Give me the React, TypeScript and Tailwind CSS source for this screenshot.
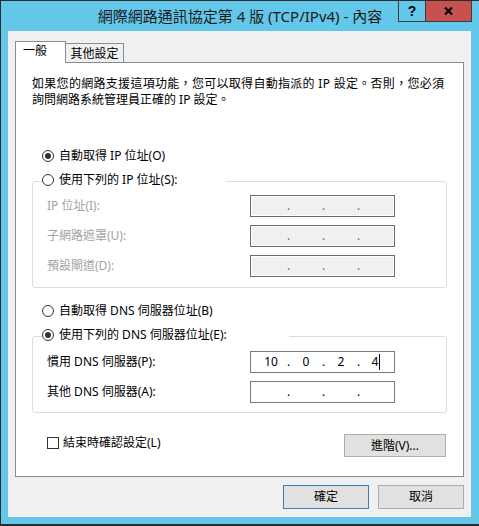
import React from 'react';

const font = "font-['Noto_Sans','Noto_Sans_CJK_TC',sans-serif]";

function Radio({ checked, label }: { checked?: boolean; label: string }) {
  return (
    <div className="flex h-[16px] items-center gap-[5px]">
      <span className="flex h-[12px] w-[12px] items-center justify-center rounded-full border border-[#333333] bg-white">
        {checked && <span className="h-[6px] w-[6px] rounded-full bg-[#333333]" />}
      </span>
      <span className="leading-[16px]">{label}</span>
    </div>
  );
}

function IpField({ parts, disabled, caret }: { parts?: string[]; disabled?: boolean; caret?: boolean }) {
  const p = parts ?? ['', '', '', ''];
  const box = disabled
    ? 'border-[#6d6d6d] bg-[#f0f0f0] shadow-[inset_0_0_0_1px_#ffffff] text-[#6d6d6d]'
    : 'border-[#7a7a7a] bg-white text-black';
  return (
    <div className={`flex h-[22px] w-[145px] items-center border pl-[4px] leading-[20px] ${box}`}>
      {p.map((v, i) => (
        <React.Fragment key={i}>
          {i > 0 && <span className="w-[3px] overflow-visible">.</span>}
          <span className="flex w-[32px] items-center justify-center">
            {v}
            {caret && i === 3 && <span className="ml-[1px] inline-block h-[16px] w-[1px] bg-black" />}
          </span>
        </React.Fragment>
      ))}
    </div>
  );
}

function GroupBox({ header, headerWidth, children }: { header: React.ReactNode; headerWidth: string; children: React.ReactNode }) {
  return (
    <div className="mx-[16px] mt-[17px] flex flex-col rounded-[3px] border border-[#d9dde2]">
      <div className={`-mt-[10px] ml-[9px] bg-white ${headerWidth}`}>{header}</div>
      {children}
    </div>
  );
}

export default function App() {
  return (
    <div className={`flex h-[526px] w-[479px] flex-col border-t border-b-2 border-l border-[#2b2b2b] bg-[#63c7ea] text-[12px] text-black ${font}`}>
      {/* title bar */}
      <div className="grid h-[30px] grid-cols-[1fr_auto_1fr]">
        <div />
        <div className="self-center pb-[1px] text-[15px] leading-[20px] text-[#1a1a1a]">
          {'網際網路通訊協定第 4 版 (TCP/IPv4) - 內容'}
        </div>
        <div className="mr-[7px] flex self-start justify-self-end">
          <div className="flex h-[21px] w-[28px] items-center justify-center border-x border-b border-[#3c3c3c] font-['Liberation_Sans',sans-serif] text-[14px] leading-[14px] font-bold">
            ?
          </div>
          <div className="flex h-[21px] w-[46px] items-center justify-center border-r border-b border-[#3c3c3c] bg-[#c75050]">
            <svg width="9" height="8" viewBox="0 0 9 8">
              <path d="M1 0.5 L8 7.5 M8 0.5 L1 7.5" stroke="#000" strokeWidth="2.2" />
            </svg>
          </div>
        </div>
      </div>

      {/* client area */}
      <div className="ml-[7px] flex h-[486px] w-[463px] flex-col bg-[#f0f0f0] pt-[10px] pl-[7px]">
        {/* tabs */}
        <div className="flex items-end">
          <div className="relative z-10 -mb-[1px] h-[22px] w-[51px] border-x border-t border-[#898c95] bg-white pt-[1px] pl-[7px] leading-[16px]">
            {'一般'}
          </div>
          <div className="h-[19px] w-[58px] border-t border-r border-[#898c95] bg-[#f0f0f0] pt-[1px] text-center leading-[18px]">
            {'其他設定'}
          </div>
        </div>

        {/* panel */}
        <div className="flex h-[415px] w-[449px] flex-col border border-[#898c95] bg-white pt-[13px]">
          <p className="pl-[16px] leading-[16px]">
            <span className="tracking-[0.3px]">{'如果您的網路支援這項功能，您可以取得自動指派的 IP 設定。否則，您必須'}</span>
            <br />
            {'詢問網路系統管理員正確的 IP 設定。'}
          </p>

          <div className="mt-[40px] ml-[26px]">
            <Radio checked label="自動取得 IP 位址(O)" />
          </div>

          <GroupBox headerWidth="w-[184px]" header={<Radio label="使用下列的 IP 位址(S):" />}>
            <div className="mt-[7px] grid grid-cols-[203px_145px] items-center gap-y-[8px] pb-[10px] pl-[14px] text-[#a3a3a3]">
              <span>{'IP 位址(I):'}</span>
              <IpField disabled />
              <span>{'子網路遮罩(U):'}</span>
              <IpField disabled />
              <span>{'預設閘道(D):'}</span>
              <IpField disabled />
            </div>
          </GroupBox>

          <div className="mt-[15px] ml-[26px]">
            <Radio label="自動取得 DNS 伺服器位址(B)" />
          </div>

          <GroupBox headerWidth="w-[247px]" header={<Radio checked label="使用下列的 DNS 伺服器位址(E):" />}>
            <div className="mt-[8px] grid grid-cols-[203px_145px] items-center gap-y-[8px] pb-[9px] pl-[14px]">
              <span>{'慣用 DNS 伺服器(P):'}</span>
              <IpField parts={['10', '0', '2', '4']} caret />
              <span>{'其他 DNS 伺服器(A):'}</span>
              <IpField />
            </div>
          </GroupBox>

          <div className="mt-[21px] flex items-start justify-between pr-[17px] pl-[31px]">
            <div className="mt-[1px] flex h-[16px] items-center gap-[4px]">
              <span className="h-[12px] w-[12px] border border-[#333333] bg-white" />
              <span className="leading-[16px]">{'結束時確認設定(L)'}</span>
            </div>
            <button className="h-[23px] w-[102px] border border-[#adadad] bg-[#e1e1e1] leading-[20px]">
              {'進階(V)...'}
            </button>
          </div>
        </div>

        {/* dialog buttons */}
        <div className="mt-[8px] flex w-[449px] justify-end gap-[9px]">
          <button className="h-[24px] w-[86px] border border-[#3c7fb1] bg-[#e1e1e1] leading-[22px]">{'確定'}</button>
          <button className="h-[24px] w-[86px] border border-[#adadad] bg-[#e1e1e1] leading-[22px]">{'取消'}</button>
        </div>
      </div>
    </div>
  );
}
